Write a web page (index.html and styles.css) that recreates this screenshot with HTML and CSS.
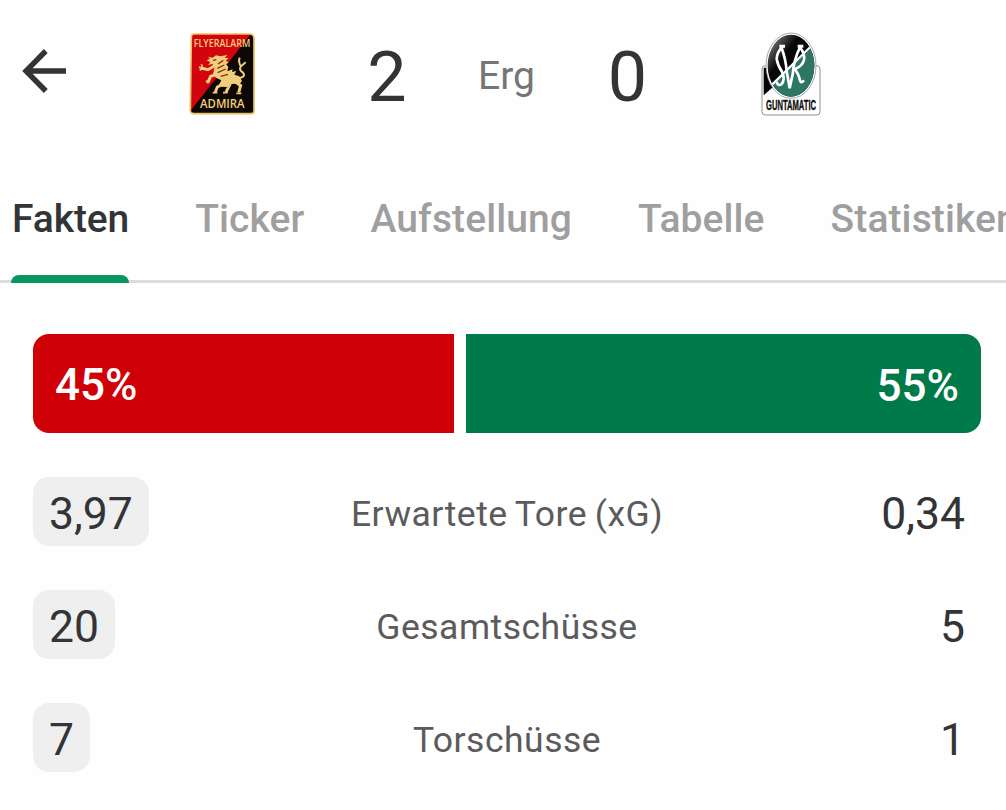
FILE: index.html
```html
<!DOCTYPE html>
<html lang="de">

<head>
    <meta charset="UTF-8">
    <meta name="viewport" content="width=device-width, initial-scale=1.0">
    <title>Spielfakten</title>
    <link rel="stylesheet" href="styles.css">
</head>

<body>
    <header class="match">
        <a class="back" href="#" aria-label="Zurück">
            <svg width="46" height="46" viewBox="0 0 46 46">
                <path d="M24.8 3 L5 23 L24.8 43 M5 23 H45" fill="none" stroke="#333435" stroke-width="5.4" />
            </svg>
        </a>
        <div class="crest">
            <svg width="68" height="84" viewBox="24 21 204 252">
                <path d="M42 27 H208 Q222 27 222 41 V258 Q222 266 214 266 H42 Q30 266 31 254 L34 36 Q34 27 42 27 Z" fill="#d2050f" />
                <path d="M212 28 Q222 30 222 41 V258 Q222 266 214 266 H42 Q34 266 31 258 Z" fill="#0d0705" />
                <path d="M42 27 H208 Q222 27 222 41 V258 Q222 266 214 266 H42 Q30 266 31 254 L34 36 Q34 27 42 27 Z" fill="none" stroke="#e9c266" stroke-width="5" />
                <!-- Greif -->
                <g fill="none" stroke="#f0cf7c" stroke-width="9">
                    <path d="M104 122 L84 134 L63 129 M112 148 L92 154 L85 169 M128 178 L112 186 L106 201 M122 180 L148 182 L138 201 M160 166 L182 182 L176 202" />
                    <path d="M176 160 Q199 155 189 143 Q175 134 183 124 L197 112 M183 124 Q174 112 179 98" stroke-width="6" />
                </g>
                <path d="M84 95 L98 98 L108 91 L121 94 L142 90 L134 98 L146 99 L137 107 L146 112 L138 118 L145 125 L142 139 L158 133 L156 141 L169 138 L163 149 L178 154 L186 168 L178 178 L160 176 L144 180 L128 185 L116 181 L124 166 L108 158 L99 146 L104 126 L97 117 L84 120 L91 112 L80 106 L90 101 Z" fill="#f0cf7c" />
                <path d="M57 126 L68 132 M59 136 L68 130 M64 118 L69 132 M78 167 L88 173 M80 174 L88 168 M98 203 H112 M129 203 H143 M169 205 H184" stroke="#f0cf7c" stroke-width="5" />
                <path d="M99 106 L109 104 M114 117 L130 106 M112 130 L133 120 M113 143 L137 132 M122 154 L144 148" stroke="#8e2a14" stroke-width="4" fill="none" />
                <text class="admira-text" x="126" y="67" font-size="30" textLength="170" lengthAdjust="spacingAndGlyphs">FLYERALARM</text>
                <text class="admira-text" x="127" y="248" font-size="37" textLength="134" lengthAdjust="spacingAndGlyphs">ADMIRA</text>
            </svg>
        </div>
        <div class="score">2</div>
        <div class="state">Erg</div>
        <div class="score">0</div>
        <div class="crest">
            <svg width="62" height="84" viewBox="30 21 186 252">
                <defs>
                    <clipPath id="oval">
                        <ellipse cx="123" cy="122" rx="70" ry="93" />
                    </clipPath>
                    <linearGradient id="shine" x1="0" y1="0" x2="1" y2="1">
                        <stop offset=".1" stop-color="#777" />
                        <stop offset=".35" stop-color="#080808" />
                    </linearGradient>
                </defs>
                <rect x="36" y="122" width="174" height="148" rx="10" fill="#fff" stroke="#8d9290" stroke-width="3" />
                <path d="M41 128 H70 V185 L41 211 Z" fill="#050505" />
                <ellipse cx="123" cy="122" rx="75" ry="98" fill="#fff" stroke="#777d7a" stroke-width="2" />
                <g clip-path="url(#oval)">
                    <rect x="50" y="25" width="146" height="195" fill="url(#shine)" />
                    <path d="M196 58 L53 192 V220 H196 Z" fill="#2d7664" />
                    <path d="M181 66 L53 192" stroke="#fff" stroke-width="7" />
                    <g fill="none" stroke="#fff" stroke-width="8">
                        <path d="M99 63 Q80 82 80 102 Q84 124 96 140 Q107 165 94 178 Q84 184 80 171" />
                        <path d="M94 67 Q107 101 110 138 L119 190 L128 148 Q131 105 151 65" />
                        <path d="M150 68 Q165 85 162 105 Q157 124 133 133 Q145 144 149 163 Q151 178 162 166" />
                    </g>
                </g>
                <path d="M88 59 H105 V68 H88 Z M143 59 H160 V68 H143 Z" fill="#fff" />
                <text class="ried-text" x="123" y="255" font-size="43" textLength="150" lengthAdjust="spacingAndGlyphs">GUNTAMATIC</text>
            </svg>
        </div>
    </header>

    <nav class="tabs">
        <a class="tab active" href="#">Fakten</a>
        <a class="tab" href="#">Ticker</a>
        <a class="tab" href="#">Aufstellung</a>
        <a class="tab" href="#">Tabelle</a>
        <a class="tab" href="#">Statistiken</a>
    </nav>

    <main class="facts">
        <div class="possession" style="grid-template-columns: 45fr 55fr">
            <div class="bar home">45%</div>
            <div class="bar away">55%</div>
        </div>
        <div class="stat">
            <span class="value better">3,97</span>
            <span class="label">Erwartete Tore (xG)</span>
            <span class="value">0,34</span>
        </div>
        <div class="stat">
            <span class="value better">20</span>
            <span class="label">Gesamtschüsse</span>
            <span class="value">5</span>
        </div>
        <div class="stat">
            <span class="value better">7</span>
            <span class="label">Torschüsse</span>
            <span class="value">1</span>
        </div>
    </main>
</body>

</html>
```
FILE: styles.css
```css
* {
    box-sizing: border-box;
}

body {
    margin: 0;
    height: 810px;
    overflow: hidden;
    background-color: #fefefe;
    font-family: Roboto, "Liberation Sans", sans-serif;
    color: #333435;
}

a {
    color: inherit;
    text-decoration: none;
}

svg {
    display: block;
}

/* Spielstand */
.match {
    display: grid;
    grid-template-columns: 144px 156px 174px 65px 177px 150px;
    align-items: center;
    height: 148px;
}

.back {
    padding: 0 0 6px 21px;
}

.crest {
    display: flex;
    justify-content: center;
}

.score {
    padding-top: 6px;
    font-size: 70px;
    text-align: center;
}

.state {
    padding-top: 3px;
    font-size: 39px;
    text-align: center;
    color: #757575;
}

.admira-text {
    font-family: "Open Sans", sans-serif;
    font-weight: 600;
    text-anchor: middle;
    fill: #f0cf7c;
}

.ried-text {
    font-family: "Liberation Sans", sans-serif;
    font-weight: bold;
    text-anchor: middle;
    fill: #111;
    stroke: #111;
    stroke-width: 1.2px;
}

/* Reiter */
.tabs {
    display: flex;
    gap: 66px;
    height: 135px;
    padding-left: 11px;
    overflow: hidden;
    box-shadow: inset 0 -3px #dcdcdc;
}

.tab {
    position: relative;
    flex-shrink: 0;
    padding-top: 46px;
    font-size: 39px;
    font-weight: 500;
    line-height: 50px;
    letter-spacing: 0.1px;
    color: #9f9f9f;
}

.tab.active {
    padding-left: 1px;
    letter-spacing: -0.1px;
    color: #333435;
}

.tab.active::after {
    content: "";
    position: absolute;
    left: 0;
    right: 0;
    bottom: 0;
    height: 8px;
    border-radius: 8px 8px 0 0;
    background-color: #07965f;
}

/* Statistik */
.facts {
    display: flex;
    flex-direction: column;
    gap: 44px;
    padding: 51px 25px 0 33px;
}

.possession {
    display: grid;
    gap: 12px;
    height: 99px;
}

.bar {
    display: flex;
    align-items: center;
    padding: 3px 22px 0;
    font-size: 44px;
    font-weight: 500;
    color: #fff;
}

.home {
    border-radius: 16px 0 0 16px;
    background-color: #d00007;
}

.away {
    justify-content: flex-end;
    padding-top: 5px;
    border-radius: 0 16px 16px 0;
    background-color: #017a49;
}

.stat {
    display: grid;
    grid-template-columns: 1fr auto 1fr;
    grid-template-rows: 69px;
    align-items: center;
}

.value {
    justify-self: end;
    height: 69px;
    padding: 3px 16px 0;
    font-size: 44.5px;
    line-height: 69px;
}

.better {
    justify-self: start;
    border-radius: 16px;
    background-color: #efefef;
}

.label {
    padding-top: 4px;
    font-size: 35.5px;
    letter-spacing: 0.5px;
    word-spacing: -1.5px;
    color: #5b5b5b;
}
```
